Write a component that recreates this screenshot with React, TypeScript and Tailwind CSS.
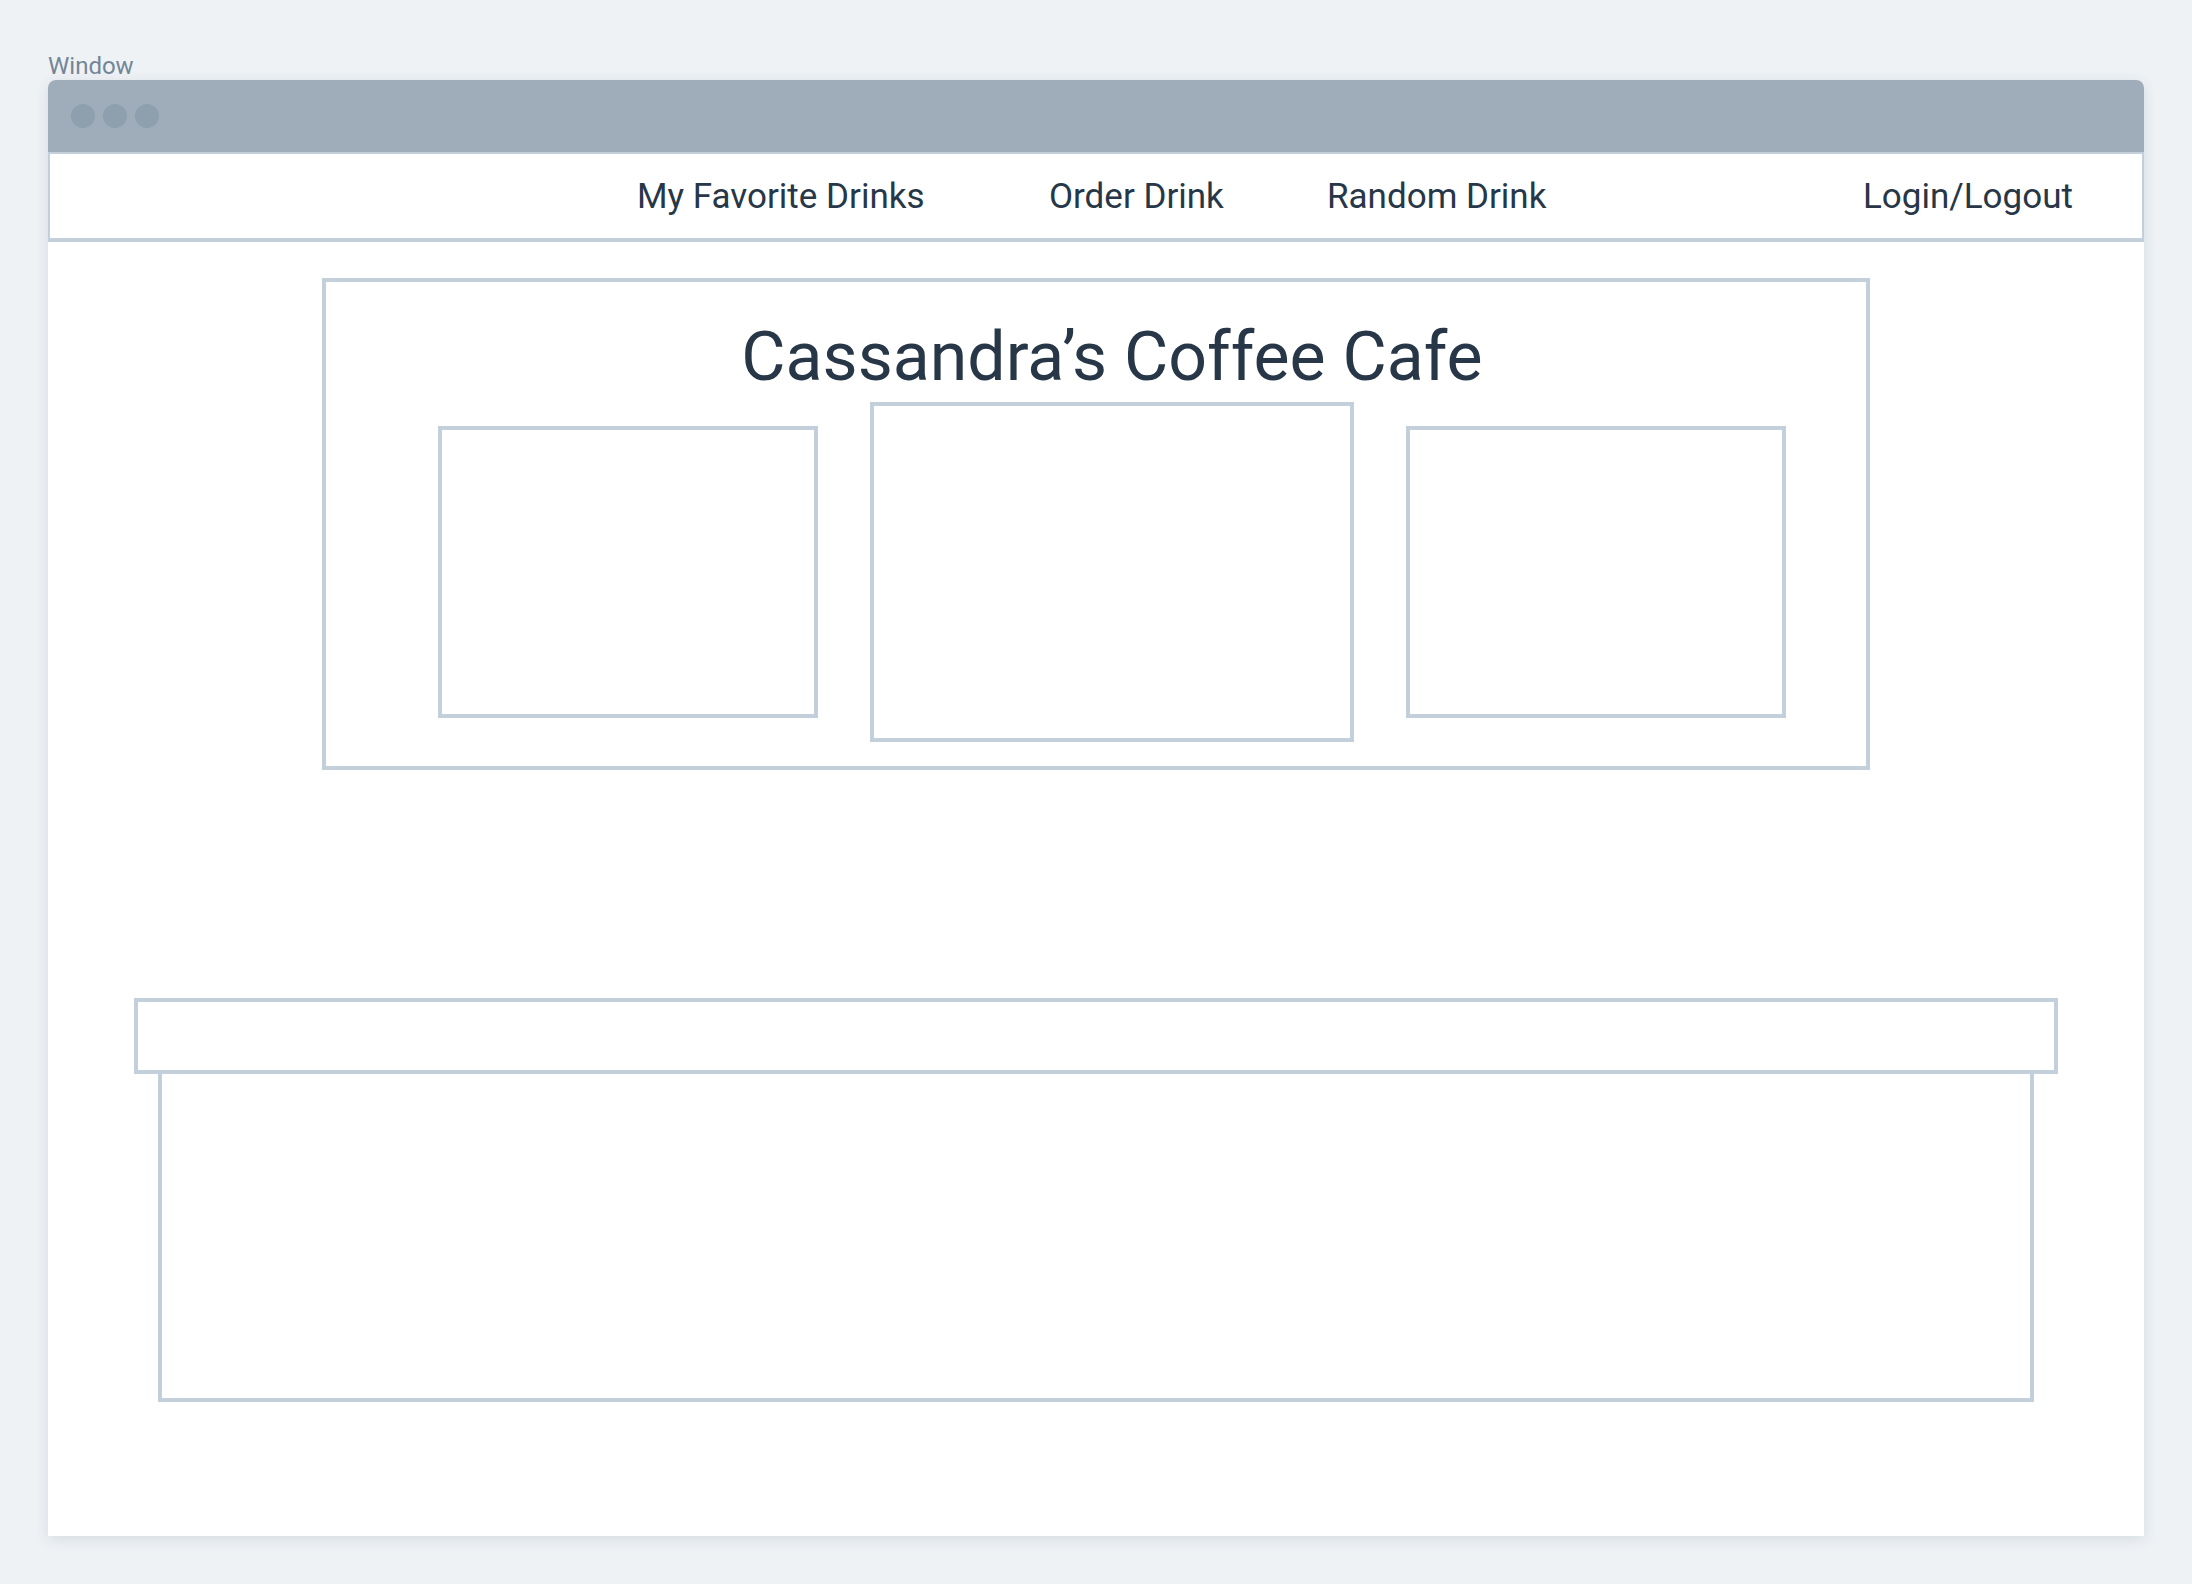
import React from 'react'

const navItems = [
  { label: 'My Favorite Drinks', width: 'w-[412px]' },
  { label: 'Order Drink', width: 'w-[278px]' },
  { label: 'Random Drink', width: 'w-[536px]' },
  { label: 'Login/Logout', width: '' },
]

function TitleBar() {
  return (
    <div className="h-[72px] shrink-0 bg-[#9eadb9] rounded-t-lg flex items-center gap-2 pl-[23px]">
      <span className="w-6 h-6 rounded-full bg-[#8e9fad]" />
      <span className="w-6 h-6 rounded-full bg-[#8e9fad]" />
      <span className="w-6 h-6 rounded-full bg-[#8e9fad]" />
    </div>
  )
}

function NavBar() {
  return (
    <nav className="h-[90px] shrink-0 border-x-2 border-t-2 border-b-4 border-[#c3d0db] flex items-center pl-[587px] text-[35px] leading-none text-[#273747]">
      {navItems.map((item) => (
        <span key={item.label} className={`${item.width} shrink-0 whitespace-nowrap`}>
          {item.label}
        </span>
      ))}
    </nav>
  )
}

function Hero() {
  return (
    <section className="w-[1548px] h-[492px] border-4 border-[#c3d0db] pl-[112px] pr-[80px] pt-[41px] flex flex-col">
      <h1 className="text-[68px] leading-[68px] text-center text-[#273747] whitespace-nowrap">
        Cassandra’s Coffee Cafe
      </h1>
      <div className="mt-[11px] h-[340px] flex items-center gap-[52px]">
        <div className="w-[380px] h-[292px] border-4 border-[#c3d0db]" />
        <div className="w-[484px] h-[340px] border-4 border-[#c3d0db]" />
        <div className="w-[380px] h-[292px] border-4 border-[#c3d0db]" />
      </div>
    </section>
  )
}

export default function App() {
  return (
    <div className="min-h-screen bg-[#eef2f5] px-12 pt-[54px] pb-12 font-['Roboto',sans-serif]">
      <div className="text-[24px] leading-6 text-[#748596] mb-[2px]">Window</div>
      <div className="w-[2096px] h-[1456px] bg-white rounded-t-lg shadow-[0_3px_14px_rgba(40,60,80,0.12)] flex flex-col">
        <TitleBar />
        <NavBar />
        <main className="flex flex-col items-center pt-9">
          <Hero />
          <div className="mt-[228px] w-[1924px] h-[76px] border-4 border-[#c3d0db]" />
          <div className="w-[1876px] h-[328px] border-x-4 border-b-4 border-[#c3d0db]" />
        </main>
      </div>
    </div>
  )
}
